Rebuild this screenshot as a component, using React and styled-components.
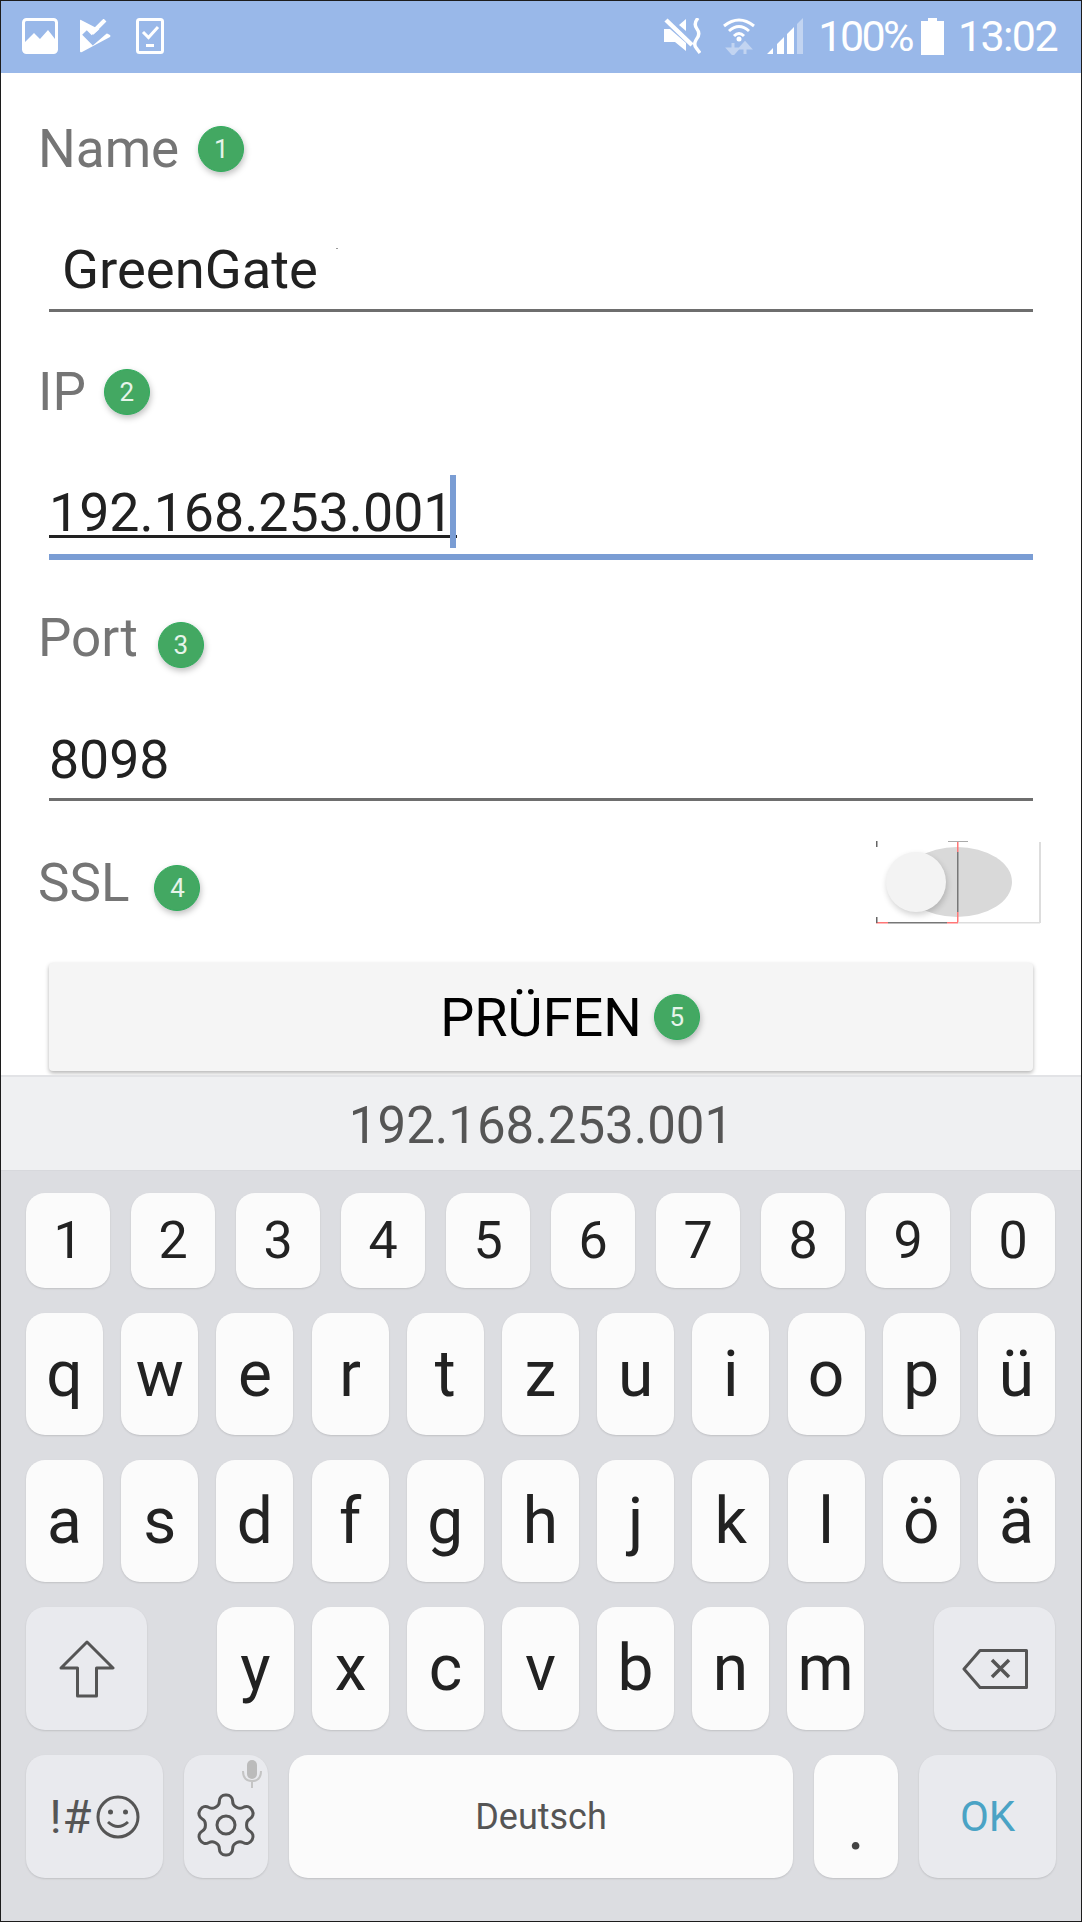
import React from "react";
import styled, { createGlobalStyle } from "styled-components";

const Global = createGlobalStyle`
  html, body { margin: 0; padding: 0; background: #fff; }
  * { box-sizing: border-box; }
`;

const Screen = styled.div`
  width: 1082px; height: 1922px; border: 1px solid #1c1c1c; overflow: hidden;
  display: flex; flex-direction: column; background: #fff;
  font-family: Roboto, "Liberation Sans", sans-serif;
`;
const StatusBar = styled.div`
  height: 72px; flex: none; background: #99b8e9; display: flex; align-items: center;
  padding: 0 24px 2px 21px; color: #fff;
`;
const StatusLeft = styled.div`display: flex; align-items: center; gap: 23px;`;
const StatusRight = styled.div`display: flex; align-items: center; margin-left: auto;`;
const StatusText = styled.span`
  font-size: 43px; line-height: 44px; letter-spacing: ${p => p.$ls}px; margin-left: ${p => p.$ml}px; font-weight: 400;
`;
const Icon = styled.svg`display: block; flex: none; margin-left: ${p => p.$ml || 0}px; margin-top: ${p => p.$mt || 0}px;`;

const Form = styled.div`flex: 1; padding-top: 40px; overflow: hidden;`;
const LabelRow = styled.div`
  height: 72px; display: flex; align-items: center; padding-left: 37px; margin-top: ${p => p.$mt || 0}px;
`;
const Label = styled.span`font-size: 53px; color: #757575; line-height: 72px;`;
const Badge = styled.span`
  width: 46px; height: 46px; border-radius: 50%; flex: none; background: #43a862; border: 1.5px solid #2fac5c;
  color: #e6f4ea; font-size: 26px; display: flex; align-items: center; justify-content: center;
  box-shadow: 1px 3px 6px rgba(0,0,0,.25);
  margin-left: ${p => p.$ml}px; margin-top: ${p => p.$mt || 0}px;
`;
const InputRow = styled.div`
  position: relative; margin: 0 48px 0 48px; height: ${p => p.$h}px; display: flex; align-items: flex-end;
  border-bottom: ${p => (p.$focus ? "6px solid #7a9dd4" : "3px solid #6e6e6e")};
`;
const InputText = styled.span`
  font-size: ${p => p.$fs || 54.4}px; line-height: 62px; color: #212121; padding-left: ${p => p.$pl || 0}px;
  padding-bottom: ${p => p.$pb || 0}px;
`;
const ComposingText = styled.span`
  font-size: 53.7px; line-height: 44px; color: #212121; padding-right: 3px;
  border-bottom: 3px solid #212121; margin-bottom: 16px;
`;
const Caret = styled.span`
  position: absolute; left: 401px; bottom: 6px; width: 6px; height: 73px; background: #7a9dd4;
`;
const Speck = styled.span`position: absolute; left: 287px; top: 63px; width: 2px; height: 1px; background: #999;`;
const SslRow = styled.div`display: flex; align-items: center; height: 82px; margin-top: 41px; padding-right: 40px;`;
const SslLabelGroup = styled.div`display: flex; align-items: center; padding-left: 37px; flex: 1;`;
const CheckButton = styled.div`
  margin: 39px 48px 0 48px; height: 108px; background: #f5f5f5; border-radius: 4px;
  box-shadow: 0 2px 4px rgba(0,0,0,.3);
  display: flex; align-items: center; justify-content: center; padding-left: 58px;
  font-size: 54px; color: #000;
`;

const Suggestion = styled.div`
  height: 96px; flex: none; background: #eff0f2; border-top: 2px solid #e2e3e6; border-bottom: 1px solid #d7d8dc;
  display: flex; align-items: center; justify-content: center; padding-top: 3px;
  font-size: 51px; color: #555;
`;
const Keyboard = styled.div`
  height: 750px; flex: none; background: #dcdde1; padding: 22px 26px 0 25px;
  display: flex; flex-direction: column; gap: 25px;
`;
const Row = styled.div`
  display: flex; height: ${p => p.$h}px; justify-content: space-between;
`;
const ShiftRow = styled.div`
  display: flex; height: 123px; gap: 18px;
`;
const BottomRow = styled.div`
  display: flex; height: 123px; gap: 21px;
`;
const Key = styled.div`
  position: relative;
  width: ${p => p.$w}px; flex: none; height: 100%;
  margin-left: ${p => p.$ml || 0}px; margin-right: ${p => p.$mr || 0}px;
  background: ${p => (p.$fn ? "#e9eaee" : "#fbfbfb")};
  border-radius: 19px;
  box-shadow: 0 1px 2px rgba(0,0,0,.13);
  display: flex; align-items: center; justify-content: center;
  color: #222; font-size: ${p => p.$fs || 64}px;
`;
const SpaceLabel = styled.span`font-size: 36px; color: #555;`;
const DotLabel = styled.span`font-size: 68px; line-height: 1; color: #444; margin-top: 18px;`;
const OkLabel = styled.span`font-size: 42px; color: #4aa3c5;`;
const SymText = styled.span`font-size: 47px; color: #555; letter-spacing: 1px;`;
const Mic = styled.svg`position: absolute; right: 6px; top: 5px;`;

const Toggle = () => (
  <Icon width="165" height="84" viewBox="0 0 165 84">
    <defs>
      <filter id="thumbShadow" x="-30%" y="-30%" width="160%" height="160%">
        <feGaussianBlur stdDeviation="3" />
      </filter>
    </defs>
    <ellipse cx="81" cy="41" rx="55" ry="35" fill="#d9d9d9" />
    <rect x="81" y="11" width="1.5" height="60" fill="#777" />
    <rect x="81" y="0" width="1.5" height="11" fill="#f77" />
    <rect x="81" y="71" width="1.5" height="11" fill="#f77" />
    <rect x="0" y="81" width="12" height="1.5" fill="#f77" />
    <rect x="12" y="81" width="59" height="1.5" fill="#777" />
    <rect x="71" y="81" width="11" height="1.5" fill="#f77" />
    <rect x="82" y="81" width="82" height="1.5" fill="#ddd" />
    <rect x="163" y="1" width="2" height="81" fill="#ddd" />
    <rect x="0" y="0" width="1.5" height="6" fill="#666" />
    <rect x="0" y="76" width="1.5" height="6" fill="#666" />
    <rect x="72" y="0" width="20" height="1" fill="#aaa" />
    <circle cx="41" cy="44" r="30" fill="#000" opacity=".18" filter="url(#thumbShadow)" />
    <circle cx="40" cy="41" r="30" fill="#f3f3f3" />
  </Icon>
);

const keyGlyphs = {
  row1: "1234567890".split(""),
  row2: "qwertzuiopü".split(""),
  row3: "asdfghjklöä".split(""),
  row4: "yxcvbnm".split(""),
};

export default function App() {
  return (
    <>
      <Global />
      <Screen>
        <StatusBar>
          <StatusLeft>
            <Icon width="36" height="36" viewBox="0 0 36 36" fill="none">
              <rect x="1.5" y="1.5" width="33" height="33" rx="3" stroke="#fff" strokeWidth="3" />
              <path d="M3 24 L12 15 L18 21 L26 12 L33 21 V33 H3 Z" fill="#fff" />
            </Icon>
            <Icon $ml={-1} width="31" height="34" viewBox="0 0 31 34">
              <path d="M1 1 L30 16 Q31 17 30 18 L2 33 Q0 34 0 32 V2 Q0 0 1 1 Z" fill="#fff" />
              <path d="M5 13 L13 21 L27 9" fill="none" stroke="#99b8e9" strokeWidth="8" />
              <path d="M6 14 L12 20 L21 13" fill="none" stroke="#99b8e9" strokeWidth="3" />
              <path d="M12 14 L25 1" fill="none" stroke="#fff" strokeWidth="4" />
              <path d="M7 9 L13 15" fill="none" stroke="#fff" strokeWidth="3.5" />
            </Icon>
            <Icon $ml={2} width="28" height="36" viewBox="0 0 28 36" fill="none">
              <rect x="1.5" y="1.5" width="25" height="33" rx="2" stroke="#fff" strokeWidth="3" />
              <path d="M7 14 L12.5 19.5 L22 9" stroke="#fff" strokeWidth="3" />
              <rect x="10" y="26" width="8" height="3" fill="#fff" />
            </Icon>
          </StatusLeft>
          <StatusRight>
            <Icon width="38" height="37" viewBox="0 0 38 37">
              <path d="M1 11 H7 L23 25 V33 L12 24 H1 Z" fill="#fff" />
              <path d="M16 7 L23 1 V13 Z" fill="#fff" />
              <path d="M3 2 L29 27" stroke="#fff" strokeWidth="4.5" />
              <path d="M35 0 Q30 6 34 11 Q38 16 33 22 Q30 27 34 31 L37 35" fill="none" stroke="#fff" strokeWidth="3.4" />
            </Icon>
            <Icon $ml={22} width="32" height="38" viewBox="0 0 32 38" fill="none">
              <path d="M1 9 Q16 -3 31 9" stroke="#fff" strokeWidth="3" />
              <path d="M6 14 Q16 5 26 14" stroke="#fff" strokeWidth="3" />
              <path d="M11 19 Q16 14 21 19" stroke="#fff" strokeWidth="3" />
              <circle cx="16" cy="22" r="2.5" fill="#fff" />
              <path d="M10 26 V34 M5.5 32 L10 37 L14.5 32 Z M22 37 V29 M17.5 31 L22 26 L26.5 31 Z" stroke="#c2d4f1" strokeWidth="3" fill="#c2d4f1" />
            </Icon>
            <Icon $ml={12} width="36" height="37" viewBox="0 0 36 37">
              <path d="M0 36 L6 30 V36 Z M10 36 V26 L17 19 V36 Z M20 36 V16 L27 9 V36 Z" fill="#fff" />
              <path d="M30 36 V6 L36 0 V36 Z" fill="#c2d4f1" />
            </Icon>
            <StatusText $ml={15} $ls={-2.6}>100%</StatusText>
            <Icon $ml={9} width="23" height="37" viewBox="0 0 23 37">
              <path d="M7 0 H16 V3 H23 V37 H0 V3 H7 Z" fill="#fff" />
            </Icon>
            <StatusText $ml={14} $ls={-1.6}>13:02</StatusText>
          </StatusRight>
        </StatusBar>

        <Form>
          <LabelRow>
            <Label>Name</Label>
            <Badge $ml={19}>1</Badge>
          </LabelRow>
          <InputRow $h={127}>
            <InputText $pl={13} $pb={8}>GreenGate</InputText>
            <Speck />
          </InputRow>
          <LabelRow $mt={44}>
            <Label>IP</Label>
            <Badge $ml={18}>2</Badge>
          </LabelRow>
          <InputRow $h={132} $focus>
            <ComposingText>192.168.253.001</ComposingText>
            <Caret />
          </InputRow>
          <LabelRow $mt={42}>
            <Label>Port</Label>
            <Badge $ml={20} $mt={14}>3</Badge>
          </LabelRow>
          <InputRow $h={127}>
            <InputText $pb={7} $fs={53.6}>8098</InputText>
          </InputRow>
          <SslRow>
            <SslLabelGroup>
              <Label>SSL</Label>
              <Badge $ml={25} $mt={10}>4</Badge>
            </SslLabelGroup>
            <Toggle />
          </SslRow>
          <CheckButton>
            PRÜFEN
            <Badge $ml={12}>5</Badge>
          </CheckButton>
        </Form>

        <Suggestion>192.168.253.001</Suggestion>

        <Keyboard>
          <Row $h={95}>
            {keyGlyphs.row1.map(k => <Key key={k} $w={84} $fs={52}>{k}</Key>)}
          </Row>
          <Row $h={122}>
            {keyGlyphs.row2.map(k => <Key key={k} $w={77}>{k}</Key>)}
          </Row>
          <Row $h={122}>
            {keyGlyphs.row3.map(k => <Key key={k} $w={77}>{k}</Key>)}
          </Row>
          <ShiftRow>
            <Key $w={121} $fn $mr={52}>
              <Icon width="56" height="58" viewBox="0 0 56 58" fill="none">
                <path d="M28 2 L54 28 H37.5 V56 H18.5 V28 H2 Z" stroke="#555" strokeWidth="3" strokeLinejoin="round" />
              </Icon>
            </Key>
            {keyGlyphs.row4.map(k => <Key key={k} $w={77}>{k}</Key>)}
            <Key $w={121} $fn $ml={52}>
              <Icon width="66" height="40" viewBox="0 0 66 40" fill="none">
                <path d="M18 1.5 H64.5 V38.5 H18 L2 20 Z" stroke="#555" strokeWidth="3" strokeLinejoin="round" />
                <path d="M30 11 L47 28 M47 11 L30 28" stroke="#555" strokeWidth="3.5" />
              </Icon>
            </Key>
          </ShiftRow>
          <BottomRow>
            <Key $w={137} $fn>
              <SymText>!#</SymText>
              <Icon $ml={3} width="44" height="44" viewBox="0 0 44 44" fill="none">
                <circle cx="22" cy="22" r="20" stroke="#555" strokeWidth="3" />
                <circle cx="14.5" cy="17" r="2.5" fill="#555" />
                <circle cx="29.5" cy="17" r="2.5" fill="#555" />
                <path d="M12 27 Q22 36 32 27" stroke="#555" strokeWidth="3" />
              </Icon>
            </Key>
            <Key $w={84} $fn>
              <Icon $mt={16} width="72" height="72" viewBox="0 0 24 24" fill="none" stroke="#555" strokeWidth="1" strokeLinejoin="round">
                <path d="M12.22 2h-.44a2 2 0 0 0-2 2v.18a2 2 0 0 1-1 1.73l-.43.25a2 2 0 0 1-2 0l-.15-.08a2 2 0 0 0-2.73.73l-.22.38a2 2 0 0 0 .73 2.73l.15.1a2 2 0 0 1 1 1.72v.51a2 2 0 0 1-1 1.74l-.15.09a2 2 0 0 0-.73 2.73l.22.38a2 2 0 0 0 2.73.73l.15-.08a2 2 0 0 1 2 0l.43.25a2 2 0 0 1 1 1.73V20a2 2 0 0 0 2 2h.44a2 2 0 0 0 2-2v-.18a2 2 0 0 1 1-1.73l.43-.25a2 2 0 0 1 2 0l.15.08a2 2 0 0 0 2.73-.73l.22-.39a2 2 0 0 0-.73-2.73l-.15-.08a2 2 0 0 1-1-1.74v-.5a2 2 0 0 1 1-1.74l.15-.09a2 2 0 0 0 .73-2.73l-.22-.38a2 2 0 0 0-2.73-.73l-.15.08a2 2 0 0 1-2 0l-.43-.25a2 2 0 0 1-1-1.73V4a2 2 0 0 0-2-2z" />
                <circle cx="12" cy="12" r="3" />
              </Icon>
              <Mic width="20" height="28" viewBox="0 0 20 28" fill="none">
                <rect x="5" y="0" width="10" height="19" rx="5" fill="#bbb" />
                <path d="M1 11 Q1 21 10 21 Q19 21 19 11 M10 21 V28" stroke="#c4c4c4" strokeWidth="2" />
              </Mic>
            </Key>
            <Key $w={504}><SpaceLabel>Deutsch</SpaceLabel></Key>
            <Key $w={84}><DotLabel>.</DotLabel></Key>
            <Key $w={137} $fn><OkLabel>OK</OkLabel></Key>
          </BottomRow>
        </Keyboard>
      </Screen>
    </>
  );
}
